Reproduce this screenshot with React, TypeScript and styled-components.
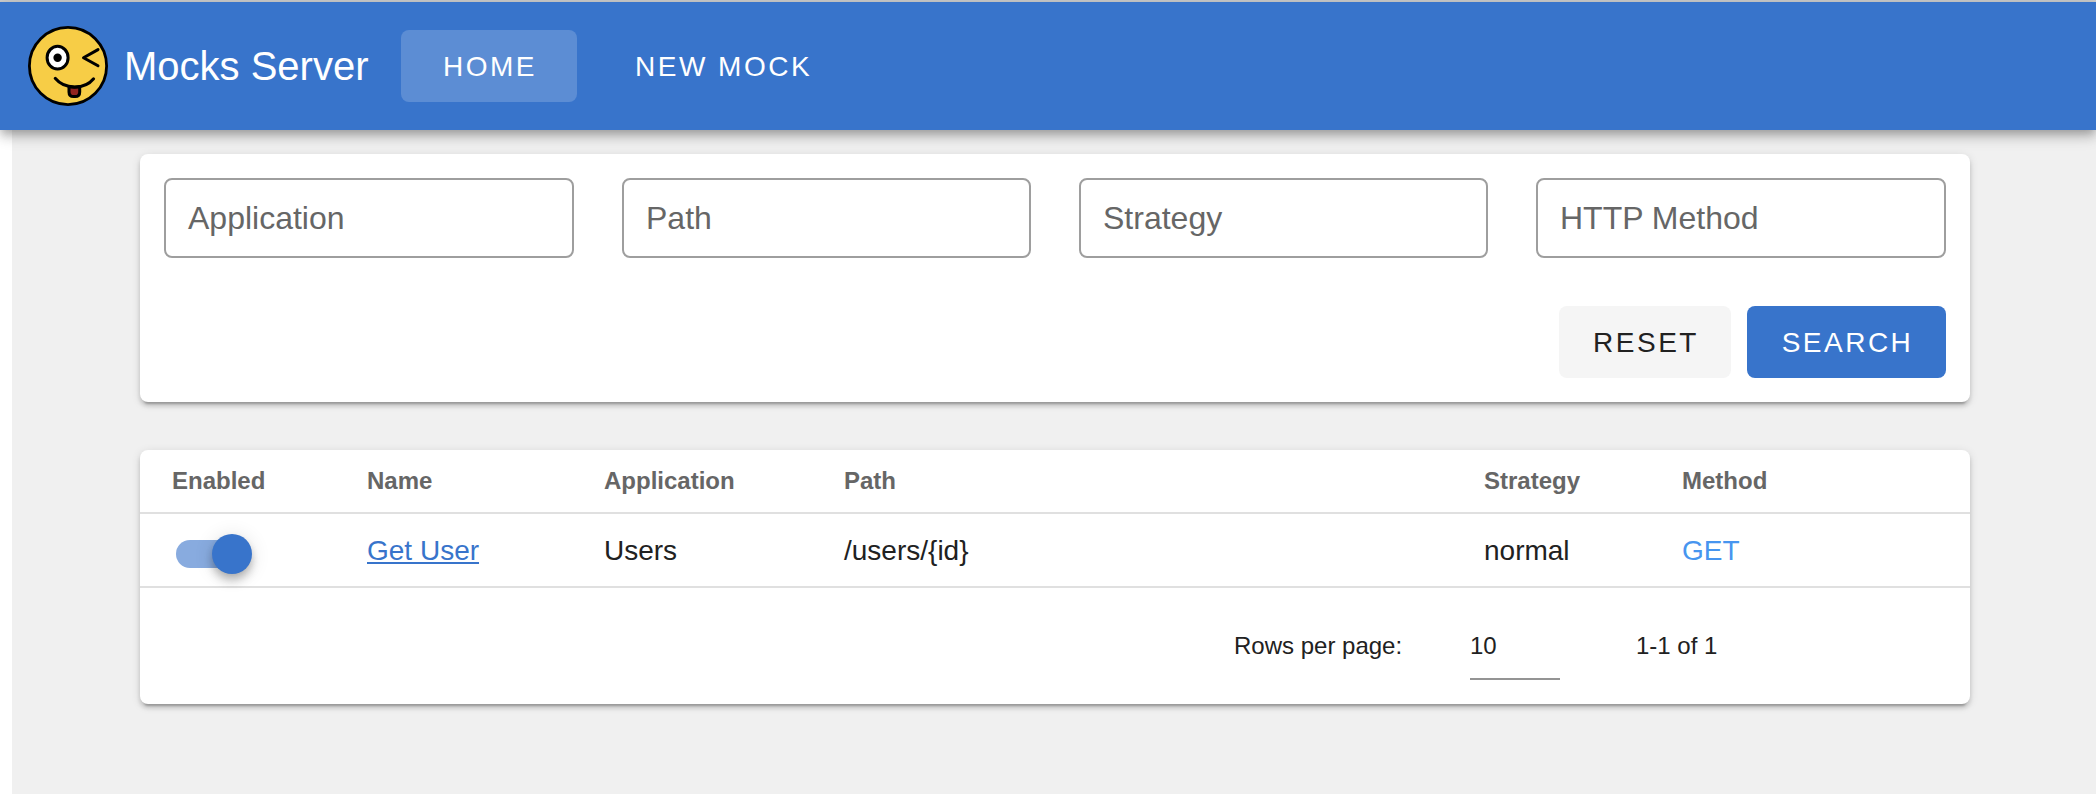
import React from "react";
import styled, { createGlobalStyle, css } from "styled-components";

const blue = "#3874cb";
const ink = "#212121";
const muted = "#666666";

const cardShadow =
  "0 6px 2px -4px rgba(0,0,0,.2), 0 4px 4px 0 rgba(0,0,0,.14), 0 2px 10px 0 rgba(0,0,0,.12)";

const GlobalStyle = createGlobalStyle`
  *, *::before, *::after { box-sizing: border-box; }
  html, body { margin: 0; background: #fff; overflow: hidden; }
  body {
    font-family: "Liberation Sans", Arial, Helvetica, sans-serif;
    color: ${ink};
  }
`;

const Page = styled.div`
  display: flex;
  flex-direction: column;
  height: 794px;
  border-top: 2px solid #cbcccd;
`;

const AppBar = styled.header`
  position: relative;
  z-index: 1;
  flex: none;
  display: flex;
  align-items: center;
  height: 128px;
  padding-left: 28px;
  background: ${blue};
  color: #fff;
  box-shadow: 0 4px 8px -2px rgba(0,0,0,.2), 0 8px 10px 0 rgba(0,0,0,.14),
    0 2px 20px 0 rgba(0,0,0,.12);
`;

const Logo = styled.svg`
  display: block;
  width: 80px;
  height: 80px;
`;

const Title = styled.h1`
  margin: 0 0 0 16px;
  width: 277px;
  font-size: 40px;
  line-height: 48px;
  font-weight: 400;
  white-space: nowrap;
`;

const Nav = styled.nav`
  display: flex;
  gap: 16px;
`;

const buttonBase = css`
  display: flex;
  align-items: center;
  justify-content: center;
  height: 72px;
  border: 0;
  border-radius: 8px;
  font-family: inherit;
  font-size: 28px;
  line-height: 32px;
  letter-spacing: 2.5px;
  text-transform: uppercase;
  white-space: nowrap;
`;

const NavButton = styled.button<{ $active?: boolean }>`
  ${buttonBase}
  padding: 1px 40px 0 42px;
  color: #fff;
  background: ${(p) => (p.$active ? "#5c8dd4" : "transparent")};
`;

const ActionButton = styled.button<{ $primary?: boolean }>`
  ${buttonBase}
  width: ${(p) => (p.$primary ? 199 : 172)}px;
  padding: 1px 0 0 2px;
  color: ${(p) => (p.$primary ? "#fff" : ink)};
  background: ${(p) => (p.$primary ? blue : "#f5f5f5")};
`;

const Main = styled.main`
  flex: 1;
  display: flex;
  flex-direction: column;
  gap: 48px;
  margin-left: 12px;
  padding: 24px 126px 0 128px;
  background: #f0f0f0;
`;

const Card = styled.section`
  border-radius: 8px;
  background: #fff;
  box-shadow: ${cardShadow};
`;

const FilterCard = styled(Card)`
  height: 248px;
  padding: 24px;
`;

const Fields = styled.div`
  display: grid;
  grid-template-columns: 410px 409px 409px 410px;
  gap: 48px;
`;

const Field = styled.div`
  display: flex;
  align-items: center;
  height: 80px;
  padding: 0 22px;
  border: 2px solid #9e9e9e;
  border-radius: 8px;
  font-size: 32px;
  color: ${muted};
`;

const Actions = styled.div`
  display: flex;
  justify-content: flex-end;
  gap: 16px;
  margin-top: 48px;
`;

const TableCard = styled(Card)`
  height: 254px;
`;

const Table = styled.table`
  width: 100%;
  border-collapse: separate;
  border-spacing: 0;
  table-layout: fixed;
`;

const HeadCell = styled.th`
  height: 64px;
  padding: 0 0 1px 32px;
  border-bottom: 2px solid #e0e0e0;
  font-size: 24px;
  line-height: 28px;
  text-align: left;
  color: ${muted};
`;

const Cell = styled.td`
  height: 74px;
  padding: 2px 0 0 32px;
  border-bottom: 2px solid #e0e0e0;
  font-size: 28px;
  line-height: 32px;
`;

const MockLink = styled.a`
  color: ${blue};
  text-decoration: underline;
  text-decoration-thickness: 2px;
  text-underline-offset: 2px;
  text-decoration-skip-ink: none;
`;

const Method = styled.span`
  color: #4795ef;
`;

const SwitchTrack = styled.span`
  display: flex;
  align-items: center;
  justify-content: flex-end;
  width: 72px;
  height: 28px;
  margin: 6px 0 0 4px;
  border-radius: 14px;
  background: #88abdf;
`;

const SwitchThumb = styled.span`
  flex: none;
  width: 40px;
  height: 40px;
  margin-right: -4px;
  border-radius: 50%;
  background: ${blue};
  box-shadow: 0 4px 8px -2px rgba(0,0,0,.2), 0 8px 10px 0 rgba(0,0,0,.14),
    0 2px 20px 0 rgba(0,0,0,.12);
`;

const Footer = styled.footer`
  display: flex;
  align-items: flex-start;
  padding: 42px 0 0 1094px;
  font-size: 24px;
  line-height: 32px;
  white-space: nowrap;
`;

const RowsLabel = styled.span`
  width: 236px;
`;

const PageSize = styled.span`
  width: 90px;
  height: 50px;
  margin-right: 76px;
  border-bottom: 2px solid #949494;
`;

const columns = [
  { title: "Enabled", width: 195 },
  { title: "Name", width: 237 },
  { title: "Application", width: 240 },
  { title: "Path", width: 640 },
  { title: "Strategy", width: 198 },
  { title: "Method", width: 320 },
];

const filters = ["Application", "Path", "Strategy", "HTTP Method"];

function WinkingFace() {
  return (
    <Logo viewBox="0 0 80 80" fill="none" stroke="#000" strokeWidth="3" strokeLinecap="round" strokeLinejoin="round">
      <circle cx="40" cy="40" r="38.6" fill="#f7cd46" strokeWidth="2.8" />
      <ellipse cx="29.6" cy="31.7" rx="10.5" ry="11.4" fill="#fff" />
      <circle cx="29.6" cy="31.7" r="4.2" fill="#000" stroke="none" />
      <path d="M70 23.6 L55.5 31.7 L70 39.8" />
      <path d="M41 60.5 V66 Q41 70.6 45.5 70.6 H47.2 Q51.7 70.6 51.7 66 V60.5 Q46.5 61.8 41 60.5 Z" fill="#92231f" />
      <path d="M27.2 52.3 C36.5 63.6 56.5 64 65.6 52.8" />
    </Logo>
  );
}

export default function App() {
  return (
    <>
      <GlobalStyle />
      <Page>
        <AppBar>
          <WinkingFace />
          <Title>Mocks Server</Title>
          <Nav>
            <NavButton $active>Home</NavButton>
            <NavButton>New mock</NavButton>
          </Nav>
        </AppBar>
        <Main>
          <FilterCard>
            <Fields>
              {filters.map((f) => (
                <Field key={f}>{f}</Field>
              ))}
            </Fields>
            <Actions>
              <ActionButton>Reset</ActionButton>
              <ActionButton $primary>Search</ActionButton>
            </Actions>
          </FilterCard>
          <TableCard>
            <Table>
              <colgroup>
                {columns.map((c) => (
                  <col key={c.title} width={c.width} />
                ))}
              </colgroup>
              <thead>
                <tr>
                  {columns.map((c) => (
                    <HeadCell key={c.title}>{c.title}</HeadCell>
                  ))}
                </tr>
              </thead>
              <tbody>
                <tr>
                  <Cell>
                    <SwitchTrack>
                      <SwitchThumb />
                    </SwitchTrack>
                  </Cell>
                  <Cell>
                    <MockLink>Get User</MockLink>
                  </Cell>
                  <Cell>Users</Cell>
                  <Cell>/users/&#123;id&#125;</Cell>
                  <Cell>normal</Cell>
                  <Cell>
                    <Method>GET</Method>
                  </Cell>
                </tr>
              </tbody>
            </Table>
            <Footer>
              <RowsLabel>Rows per page:</RowsLabel>
              <PageSize>10</PageSize>
              <span>1-1 of 1</span>
            </Footer>
          </TableCard>
        </Main>
      </Page>
    </>
  );
}
